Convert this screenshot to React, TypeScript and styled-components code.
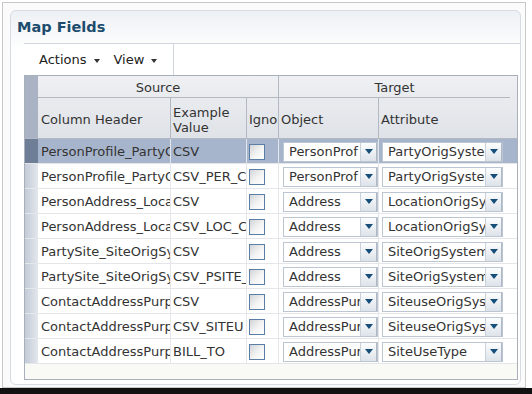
import React from 'react';
import styled, { createGlobalStyle } from 'styled-components';

const Global = createGlobalStyle`
  html, body { margin: 0; padding: 0; background: #fff; }
  body { font-family: "DejaVu Sans", "Liberation Sans", sans-serif; font-size: 13px; color: #333; }
`;

const COLS = '13px 132px 76px 32px 100px 139px';

const Page = styled.div`
  width: 532px;
  height: 394px;
  display: flex;
  flex-direction: column;
  background: #fff;
  overflow: hidden;
`;

const Frame = styled.div`
  flex: 1;
  margin: 2px 6px 0 2px;
  border: 1px solid #c9c9c9;
  padding: 7px 4px 2px 7px;
  display: flex;
  flex-direction: column;
  background: #fbfbfb;
`;

const BottomEdge = styled.div`
  height: 6px;
  background: #111;
`;

const Panel = styled.div`
  flex: 1;
  border: 1px solid #d7dce2;
  border-radius: 6px;
  background: linear-gradient(#edf0f4 0px, #ffffff 40px);
  display: flex;
  flex-direction: column;
`;

const Title = styled.h1`
  margin: 0;
  height: 32px;
  line-height: 32px;
  padding-left: 6px;
  font-size: 14.5px;
  font-weight: bold;
  color: #1d4c6c;
  font-family: "DejaVu Sans", sans-serif;
`;

const Body = styled.div`
  flex: 1;
  margin-left: 13px;
  display: flex;
  flex-direction: column;
`;

const Toolbar = styled.div`
  height: 31px;
  border-top: 1px solid #cfd6df;
  display: flex;
  background: #fff;
`;

const MenuGroup = styled.div`
  width: 150px;
  border-right: 1px solid #cfd6df;
  display: flex;
  align-items: center;
  padding-left: 15px;
  gap: 14px;
  box-sizing: border-box;
`;

const Menu = styled.span`
  display: inline-flex;
  align-items: center;
  gap: 7px;
  color: #222;
`;

const MenuArrow = styled.span`
  width: 0;
  height: 0;
  border-left: 3.5px solid transparent;
  border-right: 3.5px solid transparent;
  border-top: 4px solid #333;
  margin-top: 2px;
`;

const Table = styled.div`
  flex: 1;
  width: 494px;
  box-sizing: border-box;
  margin-bottom: 4px;
  border: 1px solid #a9b0ba;
  display: flex;
  flex-direction: column;
  background: #f9f9f6;
`;

const HeaderGrid = styled.div`
  display: grid;
  grid-template-columns: ${COLS};
  grid-template-rows: 22px 40px;
  background: linear-gradient(#eef0f3, #dfe2e7);
  border-bottom: 1px solid #b3b9c2;
`;

const Corner = styled.div`
  grid-row: 1 / 3;
  grid-column: 1;
  background: #a9b3c3;
`;

const GroupHead = styled.div<{ $first?: boolean }>`
  grid-row: 1;
  grid-column: ${(p) => (p.$first ? '2 / 5' : '5 / 7')};
  ${(p) => (p.$first ? '' : 'border-left: 1px solid #b3b9c2; margin-right: 7px;')}
  border-bottom: 1px solid #b3b9c2;
  display: flex;
  align-items: center;
  justify-content: center;
  color: #333;
  padding-top: 1px;
`;

const ColHead = styled.div<{ $first?: boolean }>`
  grid-row: 2;
  ${(p) => (p.$first ? 'padding-left: 3px;' : 'border-left: 1px solid #b3b9c2; padding-left: 2px;')}
  padding-top: 3px;
  display: flex;
  align-items: center;
  overflow: hidden;
  white-space: nowrap;
  color: #333;
  line-height: 15px;
`;

const Wrap = styled.span`
  white-space: normal;
`;

const DataRow = styled.div<{ $selected?: boolean }>`
  display: grid;
  grid-template-columns: ${COLS};
  height: 25px;
  box-sizing: border-box;
  border-bottom: 1px solid #e4e6e9;
  background: ${(p) => (p.$selected ? '#a7b5cc' : '#fff')};
`;

const RowHead = styled.div<{ $selected?: boolean }>`
  background: ${(p) => (p.$selected ? '#6e7e97' : 'linear-gradient(to right, #c4cbd7, #e3e7ed)')};
`;

const TextCell = styled.div<{ $first?: boolean }>`
  ${(p) => (p.$first ? 'padding-left: 3px;' : 'border-left: 1px solid #e4e6e9; padding-left: 2px;')}
  overflow: hidden;
  white-space: nowrap;
  line-height: 25px;
  color: #333;
`;

const CtrlCell = styled.div<{ $pad: number }>`
  border-left: 1px solid #e4e6e9;
  padding-left: ${(p) => p.$pad}px;
  display: flex;
  align-items: center;
`;

const Check = styled.span`
  width: 16px;
  height: 16px;
  box-sizing: border-box;
  border: 1px solid #5a7ea4;
  background: linear-gradient(135deg, #d2d4d8 0%, #f4f4f4 55%, #ffffff 100%);
  margin-top: 1px;
`;

const Select = styled.div<{ $w: number }>`
  width: ${(p) => p.$w}px;
  height: 20px;
  box-sizing: border-box;
  border: 1px solid #bcc6d2;
  background: #fff;
  display: flex;
  margin-top: 1px;
`;

const SelectText = styled.span`
  flex: 1;
  min-width: 0;
  overflow: hidden;
  white-space: nowrap;
  padding: 0 4px 0 5px;
  line-height: 18px;
  color: #333;
`;

const SelectBtn = styled.span`
  width: 15px;
  border-left: 1px solid #c9d1db;
  border-right: 1px solid #aeb8c4;
  background: linear-gradient(#fcfdfe, #dde3ea);
  display: flex;
  align-items: center;
  justify-content: center;
`;

const BtnArrow = styled.span`
  width: 0;
  height: 0;
  border-left: 4px solid transparent;
  border-right: 4px solid transparent;
  border-top: 5px solid #164e79;
`;

type Row = { col: string; ex: string; obj: string; attr: string };

const rows: Row[] = [
  { col: 'PersonProfile_PartyOrigSystem', ex: 'CSV', obj: 'PersonProf', attr: 'PartyOrigSystem' },
  { col: 'PersonProfile_PartyOrigSystemReference', ex: 'CSV_PER_CONTACT', obj: 'PersonProf', attr: 'PartyOrigSystemReference' },
  { col: 'PersonAddress_LocationOrigSystem', ex: 'CSV', obj: 'Address', attr: 'LocationOrigSystem' },
  { col: 'PersonAddress_LocationOrigSystemReference', ex: 'CSV_LOC_CONTACT', obj: 'Address', attr: 'LocationOrigSystemReference' },
  { col: 'PartySite_SiteOrigSystem', ex: 'CSV', obj: 'Address', attr: 'SiteOrigSystem' },
  { col: 'PartySite_SiteOrigSystemReference', ex: 'CSV_PSITE_CONTACT', obj: 'Address', attr: 'SiteOrigSystemReference' },
  { col: 'ContactAddressPurpose_SiteuseOrigSystem', ex: 'CSV', obj: 'AddressPurpose', attr: 'SiteuseOrigSystem' },
  { col: 'ContactAddressPurpose_SiteuseOrigSystemReference', ex: 'CSV_SITEU', obj: 'AddressPurpose', attr: 'SiteuseOrigSystemReference' },
  { col: 'ContactAddressPurpose_SiteUseType', ex: 'BILL_TO', obj: 'AddressPurpose', attr: 'SiteUseType' },
];

const Dropdown = ({ w, value }: { w: number; value: string }) => (
  <Select $w={w}>
    <SelectText>{value}</SelectText>
    <SelectBtn>
      <BtnArrow />
    </SelectBtn>
  </Select>
);

export default function App() {
  return (
    <Page>
      <Global />
      <Frame>
        <Panel>
          <Title>Map Fields</Title>
          <Body>
            <Toolbar>
              <MenuGroup>
                <Menu>
                  Actions <MenuArrow />
                </Menu>
                <Menu>
                  View <MenuArrow />
                </Menu>
              </MenuGroup>
            </Toolbar>
            <Table>
              <HeaderGrid>
                <Corner />
                <GroupHead $first>Source</GroupHead>
                <GroupHead>Target</GroupHead>
                <ColHead $first>Column Header</ColHead>
                <ColHead>
                  <Wrap>Example Value</Wrap>
                </ColHead>
                <ColHead>Ignore</ColHead>
                <ColHead>Object</ColHead>
                <ColHead>Attribute</ColHead>
              </HeaderGrid>
              {rows.map((r, i) => (
                <DataRow key={i} $selected={i === 0}>
                  <RowHead $selected={i === 0} />
                  <TextCell $first>{r.col}</TextCell>
                  <TextCell>{r.ex}</TextCell>
                  <CtrlCell $pad={2}>
                    <Check />
                  </CtrlCell>
                  <CtrlCell $pad={4}>
                    <Dropdown w={95} value={r.obj} />
                  </CtrlCell>
                  <CtrlCell $pad={3}>
                    <Dropdown w={121} value={r.attr} />
                  </CtrlCell>
                </DataRow>
              ))}
            </Table>
          </Body>
        </Panel>
      </Frame>
      <BottomEdge />
    </Page>
  );
}
